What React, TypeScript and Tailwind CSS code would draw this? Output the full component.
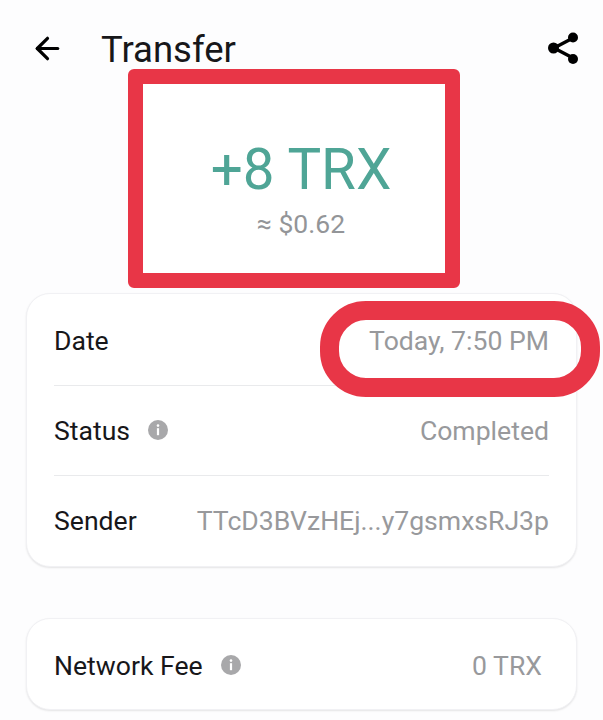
import React from 'react';
import { ArrowLeft } from 'lucide-react';

const font = "font-['Roboto',sans-serif]";

const InfoDot: React.FC = () => (
  <svg width="20" height="20" viewBox="0 0 20 20" className="shrink-0">
    <circle cx="10" cy="10" r="10" fill="#a8a8aa" />
    <circle cx="10" cy="5.6" r="1.3" fill="#ffffff" />
    <rect x="8.9" y="8.2" width="2.2" height="7" fill="#ffffff" />
  </svg>
);

const ShareIcon: React.FC = () => (
  <svg width="34" height="36" viewBox="0 0 34 36" className="text-black">
    <path d="M26 8 L7 18 L26 28" fill="none" stroke="currentColor" strokeWidth="3.4" />
    <circle cx="26" cy="7.5" r="5" fill="currentColor" />
    <circle cx="6.5" cy="18" r="5.5" fill="currentColor" />
    <circle cx="26" cy="29" r="5" fill="currentColor" />
  </svg>
);

type RowProps = { label: string; value: string; info?: boolean; divider?: boolean };

const Row: React.FC<RowProps> = ({ label, value, info, divider }) => (
  <div className={`flex h-[90px] items-center justify-between ${divider ? 'border-b border-[#e9eaec]' : ''}`}>
    <div className="flex items-center gap-[18px]">
      <span className="text-[26.6px] text-[#17171a]">{label}</span>
      {info && <InfoDot />}
    </div>
    <span className="text-[26.6px] text-[#98999c]">{value}</span>
  </div>
);

const App: React.FC = () => {
  return (
    <div className={`relative h-[720px] w-[603px] overflow-hidden bg-[#fdfdfe] ${font}`}>
      {/* Header */}
      <div className="flex h-[69px] items-start justify-between pl-[30px] pr-[22px] pt-[30px]">
        <div className="flex items-center gap-[36px]">
          <ArrowLeft size={35} strokeWidth={2.2} className="-mt-[3px] text-black" />
          <span className="text-[36.5px] leading-[40px] text-[#17171a]">Transfer</span>
        </div>
        <ShareIcon />
      </div>

      {/* Amount, boxed in red */}
      <div className="ml-[128px] flex h-[219px] w-[332px] flex-col items-center rounded-[6px] border-[15px] border-[#e83647] bg-white pl-[14px] pt-[53px]">
        <span className="text-[56.5px] leading-[66px] text-[#4fa596]">+8 TRX</span>
        <span className="mt-[6px] text-[26.5px] leading-[30px] text-[#939598]">≈ $0.62</span>
      </div>

      {/* Details */}
      <div className="mx-[26px] mt-[5px] rounded-[24px] border border-[#f1f1f4] bg-white px-[27px] pt-[2px] shadow-[0_1px_2px_rgba(0,0,0,0.1)]">
        <Row label="Date" value="Today, 7:50 PM" divider />
        <Row label="Status" value="Completed" info divider />
        <Row label="Sender" value="TTcD3BVzHEj...y7gsmxsRJ3p" />
      </div>

      <div className="mx-[26px] mt-[51px] flex h-[92px] items-center rounded-[24px] border border-[#f1f1f4] bg-white pl-[27px] pr-[34px] pt-[3px] shadow-[0_1px_2px_rgba(0,0,0,0.1)]">
        <div className="w-full">
          <Row label="Network Fee" value="0 TRX" info />
        </div>
      </div>

      {/* Red marker round the date */}
      <div className="absolute left-[320px] top-[301px] h-[96px] w-[280px] rounded-[46px] border-[19px] border-[#e83647]" />
    </div>
  );
};

export default App;
